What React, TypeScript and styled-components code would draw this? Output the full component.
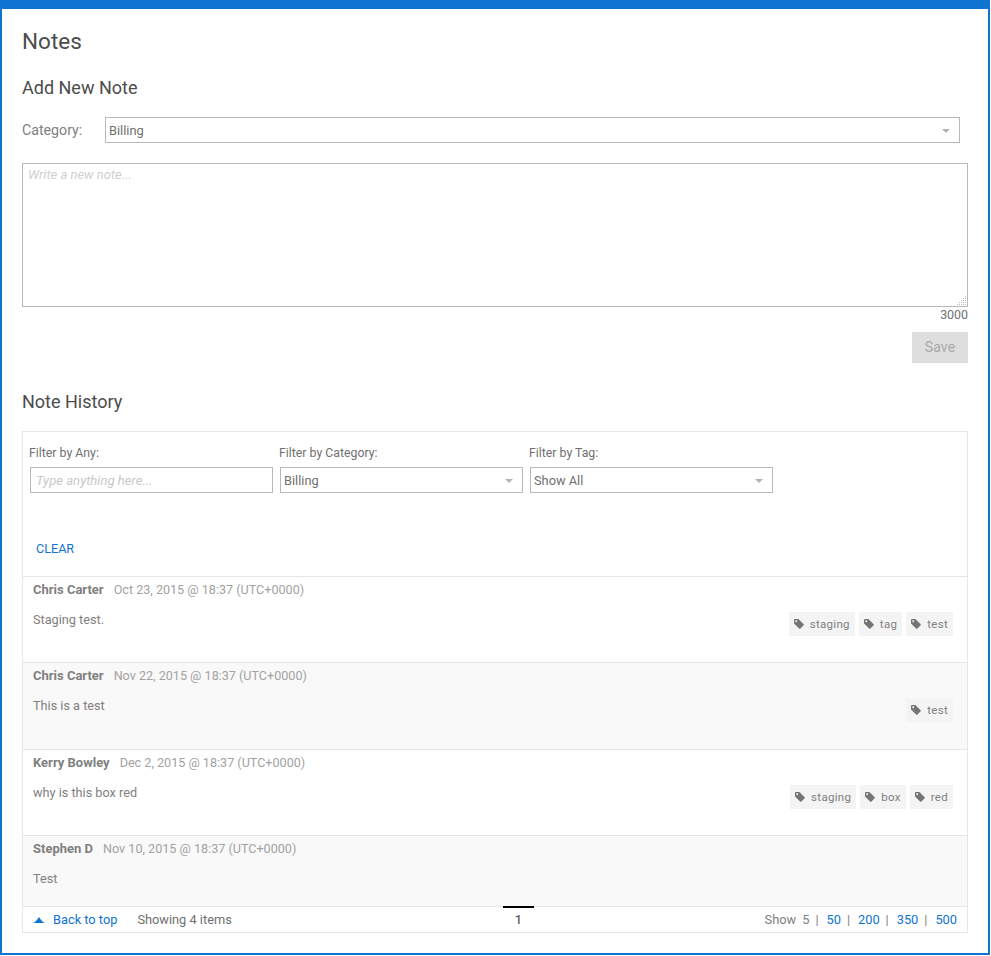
import React from "react";
import styled, { createGlobalStyle } from "styled-components";

const GlobalStyle = createGlobalStyle`
  html, body {
    margin: 0;
    padding: 0;
    background: #fff;
  }
  body {
    font-family: Roboto, "Liberation Sans", sans-serif;
    color: #666;
  }
  * { box-sizing: border-box; }
`;

const Page = styled.div`
  width: 990px;
  height: 955px;
  border: 2px solid #0f74d1;
  border-top-width: 9px;
  padding: 0 20px;
`;

const Title = styled.h1`
  margin: 0;
  padding-top: 19px;
  font-size: 22.5px;
  line-height: 27px;
  font-weight: 400;
  color: #4c4c4c;
`;

const SectionTitle = styled.h2<{ $top: number }>`
  margin: ${(p) => p.$top}px 0 0;
  font-size: 18px;
  line-height: 22px;
  font-weight: 400;
  color: #4c4c4c;
`;

const CategoryRow = styled.div`
  display: flex;
  align-items: center;
  margin-top: 18px;
`;

const CategoryLabel = styled.label`
  width: 83px;
  font-size: 14.2px;
  color: #808080;
`;

const SelectBox = styled.div<{ $width: number }>`
  position: relative;
  width: ${(p) => p.$width}px;
  height: 26px;
  border: 1px solid #b8b8b8;
  background: #fff;
  padding-left: 3px;
  font-size: 12.8px;
  line-height: 25px;
  color: #707070;

  &::after {
    content: "";
    position: absolute;
    right: 9px;
    top: 11px;
    border-left: 4px solid transparent;
    border-right: 4px solid transparent;
    border-top: 4px solid #b4b4b4;
  }
`;

const NoteArea = styled.div`
  position: relative;
  height: 144px;
  margin-top: 20px;
  border: 1px solid #b8b8b8;
  padding: 3px 5px;
  font-size: 13px;
  line-height: 16px;
  font-style: italic;
  color: #cfcfcf;
`;

const Grip = styled.svg`
  position: absolute;
  right: 0;
  bottom: 0;
`;

const Counter = styled.div`
  text-align: right;
  font-size: 12.4px;
  line-height: 15px;
  color: #707070;
`;

const SaveRow = styled.div`
  display: flex;
  justify-content: flex-end;
  margin-top: 10px;
`;

const SaveButton = styled.button`
  width: 56px;
  height: 31px;
  border: 0;
  padding: 0 0 2px;
  background: #dedede;
  color: #a8a8a8;
  font: 400 14px Roboto, sans-serif;
  letter-spacing: 0.2px;
`;

const HistoryPanel = styled.section`
  margin-top: 18px;
  border: 1px solid #e6e6e6;
`;

const Filters = styled.div`
  height: 144px;
  padding: 13px 6px 0;
`;

const FilterGrid = styled.div`
  display: flex;
  gap: 7px;
`;

const FilterCol = styled.div`
  width: 243px;
`;

const FilterLabel = styled.div`
  font-size: 12.3px;
  line-height: 16px;
  color: #707070;
  margin-bottom: 6px;
`;

const FilterInput = styled.div`
  margin-left: 1px;
  width: 243px;
  height: 26px;
  border: 1px solid #b8b8b8;
  padding-left: 5px;
  font-size: 13.1px;
  line-height: 25px;
  font-style: italic;
  color: #c8c8c8;
`;

const SelectSlot = styled.div`
  margin-left: 1px;
`;

const ClearLink = styled.a`
  display: block;
  margin: 48px 0 0 7px;
  font-size: 12.6px;
  line-height: 16px;
  color: #0f74d1;
`;

const NoteRow = styled.article<{ $shade: boolean; $height: number }>`
  position: relative;
  height: ${(p) => p.$height}px;
  border-top: 1px solid #e6e6e6;
  background: ${(p) => (p.$shade ? "#f9f9f9" : "#fff")};
  padding: 5px 14px 0 10px;
`;

const NoteMeta = styled.div`
  display: flex;
  align-items: baseline;
  gap: 10px;
  line-height: 16px;
`;

const Author = styled.span`
  font-size: 13px;
  font-weight: 700;
  color: #808080;
`;

const Stamp = styled.span`
  font-size: 12.6px;
  color: #a2a2a2;
`;

const NoteBody = styled.div`
  margin-top: 14px;
  font-size: 12.7px;
  line-height: 16px;
  color: #808080;
`;

const TagList = styled.div`
  position: absolute;
  right: 14px;
  top: 35px;
  display: flex;
  gap: 4px;
`;

const Tag = styled.span`
  display: flex;
  align-items: center;
  gap: 6px;
  height: 24px;
  padding: 0 5px;
  background: #f4f4f4;
  font-size: 11.5px;
  letter-spacing: 0.3px;
  color: #808080;
`;

const Footer = styled.footer`
  position: relative;
  display: flex;
  align-items: center;
  height: 26px;
  border-top: 1px solid #e6e6e6;
  padding: 0 10px;
  font-size: 12.8px;
`;

const BackToTop = styled.a`
  display: flex;
  align-items: center;
  gap: 8px;
  color: #0f74d1;
`;

const Showing = styled.span`
  margin-left: 20px;
  color: #707070;
`;

const PageMark = styled.span`
  position: absolute;
  left: 480px;
  top: -1px;
  width: 31px;
  height: 26px;
  border-top: 2px solid #000;
  text-align: center;
  line-height: 24px;
  font-weight: 500;
  color: #606060;
`;

const PageSizes = styled.div`
  margin-left: auto;
  display: flex;
  color: #808080;
`;

const SizeLink = styled.a`
  margin-left: 8px;
  color: #0f74d1;
`;

const Pipe = styled.span`
  margin-left: 6px;
  color: #808080;
`;

const TagIcon = () => (
  <svg width="10" height="10" viewBox="0 0 10 10">
    <path
      fill="#757575"
      fillRule="evenodd"
      d="M0 1 Q0 0 1 0 L4.4 0 L9.7 5.3 Q10 5.8 9.7 6.2 L6.2 9.7 Q5.8 10 5.3 9.7 L0 4.4 Z M2.2 1.3 a0.9 0.9 0 1 0 0.01 0 Z"
    />
  </svg>
);

const notes = [
  { author: "Chris Carter", stamp: "Oct 23, 2015 @ 18:37 (UTC+0000)", body: "Staging test.", tags: ["staging", "tag", "test"], height: 86 },
  { author: "Chris Carter", stamp: "Nov 22, 2015 @ 18:37 (UTC+0000)", body: "This is a test", tags: ["test"], height: 87 },
  { author: "Kerry Bowley", stamp: "Dec 2, 2015 @ 18:37 (UTC+0000)", body: "why is this box red", tags: ["staging", "box", "red"], height: 86 },
  { author: "Stephen D", stamp: "Nov 10, 2015 @ 18:37 (UTC+0000)", body: "Test", tags: [], height: 71 },
];

export default function App() {
  return (
    <Page>
      <GlobalStyle />
      <Title>Notes</Title>
      <SectionTitle $top={22}>Add New Note</SectionTitle>
      <CategoryRow>
        <CategoryLabel>Category:</CategoryLabel>
        <SelectBox $width={855}>Billing</SelectBox>
      </CategoryRow>
      <NoteArea>
        Write a new note...
        <Grip width="12" height="12" viewBox="0 0 12 12">
          <path fill="#bbb" d="M10 2h1v1h-1zM8 4h1v1H8zM10 4h1v1h-1zM6 6h1v1H6zM8 6h1v1H8zM10 6h1v1h-1zM4 8h1v1H4zM6 8h1v1H6zM8 8h1v1H8zM10 8h1v1h-1zM2 10h1v1H2zM4 10h1v1H4zM6 10h1v1H6zM8 10h1v1H8zM10 10h1v1h-1z" />
        </Grip>
      </NoteArea>
      <Counter>3000</Counter>
      <SaveRow>
        <SaveButton>Save</SaveButton>
      </SaveRow>
      <SectionTitle $top={28}>Note History</SectionTitle>
      <HistoryPanel>
        <Filters>
          <FilterGrid>
            <FilterCol>
              <FilterLabel>Filter by Any:</FilterLabel>
              <FilterInput>Type anything here...</FilterInput>
            </FilterCol>
            <FilterCol>
              <FilterLabel>Filter by Category:</FilterLabel>
              <SelectSlot>
                <SelectBox $width={243}>Billing</SelectBox>
              </SelectSlot>
            </FilterCol>
            <FilterCol>
              <FilterLabel>Filter by Tag:</FilterLabel>
              <SelectSlot>
                <SelectBox $width={243}>Show All</SelectBox>
              </SelectSlot>
            </FilterCol>
          </FilterGrid>
          <ClearLink>CLEAR</ClearLink>
        </Filters>
        {notes.map((note, i) => (
          <NoteRow key={note.stamp} $shade={i % 2 === 1} $height={note.height}>
            <NoteMeta>
              <Author>{note.author}</Author>
              <Stamp>{note.stamp}</Stamp>
            </NoteMeta>
            <NoteBody>{note.body}</NoteBody>
            <TagList>
              {note.tags.map((tag) => (
                <Tag key={tag}>
                  <TagIcon />
                  {tag}
                </Tag>
              ))}
            </TagList>
          </NoteRow>
        ))}
        <Footer>
          <BackToTop>
            <svg width="12" height="6" viewBox="0 0 12 6">
              <path fill="#0f74d1" d="M0 6 Q3 5 6 0 Q9 5 12 6 Z" />
            </svg>
            Back to top
          </BackToTop>
          <Showing>Showing 4 items</Showing>
          <PageMark>1</PageMark>
          <PageSizes>
            Show
            <Pipe>5</Pipe>
            <Pipe>|</Pipe>
            {["50", "200", "350", "500"].map((n, i, all) => (
              <React.Fragment key={n}>
                <SizeLink>{n}</SizeLink>
                {i < all.length - 1 && <Pipe>|</Pipe>}
              </React.Fragment>
            ))}
          </PageSizes>
        </Footer>
      </HistoryPanel>
    </Page>
  );
}
